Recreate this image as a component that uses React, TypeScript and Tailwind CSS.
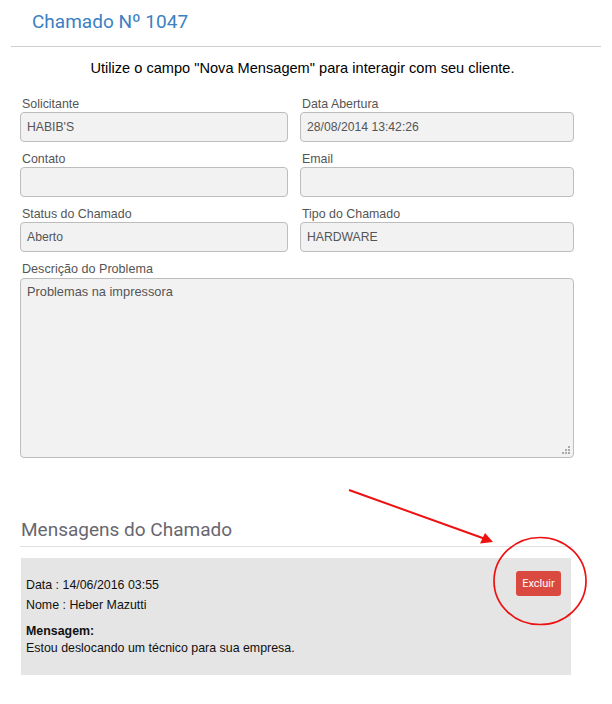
import React from "react";

const field =
  "h-[30px] w-full rounded-[4px] border border-[#bdbdbd] bg-[#f2f2f2] px-[6px] text-[12.2px] leading-[28px] text-[#555]";

function Field({ label, value }: { label: string; value: string }) {
  return (
    <div className="flex flex-col">
      <div className="h-[17px] pt-[1px] text-[12.4px] leading-[16px] text-[#555] pl-[2px]">{label}</div>
      <div className={field}>{value}</div>
    </div>
  );
}

export default function App() {
  return (
    <div
      className="relative w-[612px] h-[704px] bg-white"
      style={{ fontFamily: '"Liberation Sans", Arial, sans-serif' }}
    >
      <div className="pl-[32px] pt-[9px] h-[46px] text-[19px] leading-[26px] text-[#3c7fc2]" style={{ fontFamily: "Roboto, sans-serif" }}>
        Chamado Nº 1047
      </div>
      <div className="mx-[11px] border-t border-[#cfcfcf]" />
      <div className="ml-[11px] mr-[18px] pt-[11px] h-[48px] text-center text-[14.6px] leading-[20px] text-black">
        Utilize o campo "Nova Mensagem" para interagir com seu cliente.
      </div>
      <div className="px-[20px] grid grid-cols-[268px_274px] gap-x-[12px] gap-y-[8px]">
        <Field label="Solicitante" value="HABIB'S" />
        <Field label="Data Abertura" value="28/08/2014 13:42:26" />
        <Field label="Contato" value="" />
        <Field label="Email" value="" />
        <Field label="Status do Chamado" value="Aberto" />
        <Field label="Tipo do Chamado" value="HARDWARE" />
        <div className="col-span-2 flex flex-col">
          <div className="h-[18px] pt-[1px] text-[12.6px] leading-[16px] text-[#555] pl-[2px]">Descrição do Problema</div>
          <div className="relative h-[180px] w-full rounded-[4px] border border-[#bdbdbd] bg-[#f2f2f2] px-[6px] pt-[4px] text-[12.8px] leading-[18px] text-[#555]">
            Problemas na impressora
            <svg className="absolute right-[2px] bottom-[2px]" width="10" height="10" viewBox="0 0 10 10">
              <rect x="7" y="1" width="2" height="2" fill="#aaa" />
              <rect x="4" y="4" width="2" height="2" fill="#aaa" />
              <rect x="7" y="4" width="2" height="2" fill="#aaa" />
              <rect x="1" y="7" width="2" height="2" fill="#aaa" />
              <rect x="4" y="7" width="2" height="2" fill="#aaa" />
              <rect x="7" y="7" width="2" height="2" fill="#aaa" />
            </svg>
          </div>
        </div>
      </div>
      <div className="mt-[56px] mx-[20px] w-[553px]">
        <div className="h-[32px] pt-[4px] text-[19px] leading-[24px] text-[#676770] pl-[1px]" style={{ fontFamily: "Roboto, sans-serif" }}>
          Mensagens do Chamado
        </div>
        <div className="border-t border-[#e0e0e0]" />
        <div className="mt-[11px] ml-[1px] w-[550px] h-[117px] bg-[#e5e5e5] flex justify-between pl-[5px] pr-[10px] pt-[13px]">
          <div className="pt-[4px] text-[12.4px] text-[#111]">
            <div className="leading-[20px]">Data : 14/06/2016 03:55</div>
            <div className="leading-[20px]">Nome : Heber Mazutti</div>
            <div className="mt-[8px] font-bold leading-[17px]">Mensagem:</div>
            <div className="leading-[17px]">Estou deslocando um técnico para sua empresa.</div>
          </div>
          <div className="h-[25px] w-[45px] rounded-[3px] bg-[#d9493f] text-white text-[11px] leading-[25px] text-center" style={{ fontFamily: "Roboto, sans-serif" }}>
            Excluir
          </div>
        </div>
      </div>
      <svg className="absolute left-0 top-0 pointer-events-none" width="612" height="704">
        <line x1="349" y1="490" x2="484" y2="538.5" stroke="#ee1111" strokeWidth="2" />
        <polygon points="493,542 480,543.5 485,533" fill="#ee1111" />
        <ellipse cx="540" cy="581" rx="46" ry="43.5" fill="none" stroke="#ee1111" strokeWidth="1.7" />
      </svg>
    </div>
  );
}
